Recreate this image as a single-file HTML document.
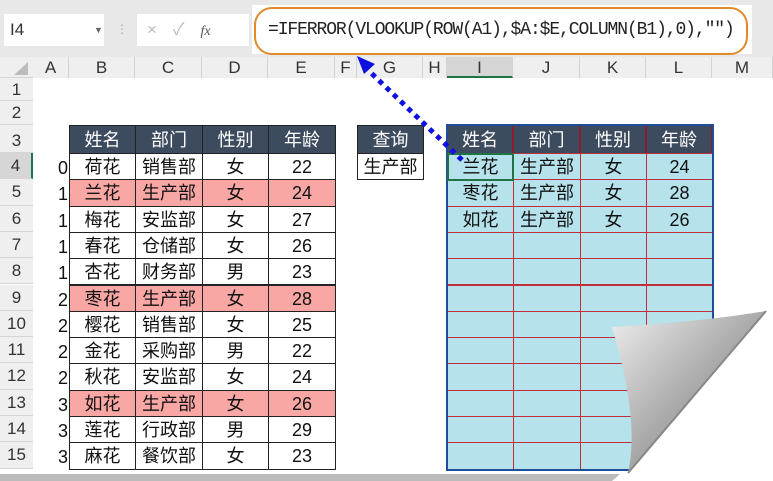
<!DOCTYPE html><html><head><meta charset="utf-8"><style>
body{margin:0;width:773px;height:481px;overflow:hidden;background:#fff;font-family:"Liberation Sans","Noto Sans CJK SC",sans-serif;position:relative}
.a{position:absolute;box-sizing:border-box}
.ch{position:absolute;top:57px;height:21px;font-size:17px;color:#333;text-align:center;line-height:21px;border-right:1px solid #d4d4d4;box-sizing:border-box;background:#efefef}
.rh{position:absolute;left:0;width:33px;font-size:17px;color:#333;text-align:center;background:#efefef;border-bottom:1px solid #d4d4d4;box-sizing:border-box}
.c{position:absolute;box-sizing:border-box;text-align:center;font-size:18px;color:#111;font-family:"Liberation Sans","Noto Sans CJK SC",sans-serif}
</style></head><body>
<div class="a" style="left:0;top:0;width:773px;height:57px;background:#e8e8e8"></div>
<div class="a" style="left:4px;top:14px;width:100px;height:32px;background:#fff;font-size:17px;line-height:32px;padding-left:6px;color:#333">I4<span style="position:absolute;left:90px;font-size:9px;color:#666">▼</span></div>
<div class="a" style="left:116px;top:22px;font-size:12px;color:#aaa">⋮</div>
<div class="a" style="left:137px;top:14px;width:112px;height:32px;background:#fff;font-size:17px;line-height:32px;color:#bbb;padding-left:10px;letter-spacing:16px">×✓<i style="color:#555;font-family:'Liberation Serif';font-size:14px;letter-spacing:0">fx</i></div>
<div class="a" style="left:252px;top:5px;width:500px;height:49px;background:#fff"></div>
<div class="a" style="left:254px;top:7px;width:494px;height:48px;border:2.5px solid #e08a2a;border-radius:18px;font-family:'Liberation Mono',monospace;font-size:18px;line-height:43px;padding-left:12px;color:#222;letter-spacing:-1.1px">=IFERROR(VLOOKUP(ROW(A1),$A:$E,COLUMN(B1),0),"")</div>
<div class="a" style="left:0;top:57px;width:773px;height:21px;background:#efefef;border-bottom:1px solid #d4d4d4"></div>
<svg class="a" style="left:10px;top:60px" width="20" height="16"><polygon points="18,2 18,15 4,15" fill="#bcbcbc"/></svg>
<div class="ch" style="left:33px;width:36px">A</div><div class="ch" style="left:69px;width:66px">B</div><div class="ch" style="left:135px;width:67px">C</div><div class="ch" style="left:202px;width:66px">D</div><div class="ch" style="left:268px;width:67px">E</div><div class="ch" style="left:335px;width:22px">F</div><div class="ch" style="left:357px;width:66px">G</div><div class="ch" style="left:423px;width:24px">H</div><div class="ch" style="left:447px;width:66px;background:#d6d6d6;border-bottom:2px solid #217346">I</div><div class="ch" style="left:513px;width:67px">J</div><div class="ch" style="left:580px;width:66px">K</div><div class="ch" style="left:646px;width:66px">L</div><div class="ch" style="left:712px;width:61px">M</div>
<div class="rh" style="top:78px;height:23px;line-height:23px">1</div>
<div class="rh" style="top:101px;height:24px;line-height:24px">2</div>
<div class="rh" style="top:125px;height:28px;line-height:32px">3</div>
<div id="rows"></div>
<svg class="a" style="left:0;top:0" width="773" height="481">
<line x1="462" y1="160" x2="368" y2="70" stroke="#1010e0" stroke-width="5" stroke-dasharray="5,5"/>
<polygon points="357,56 375,64 364,74" fill="#1010e0"/>
<polygon points="766,311 773,300 773,481 610,481 628,473" fill="#fff"/>
<defs><linearGradient id="cg" x1="0" y1="0" x2="1" y2="1"><stop offset="0" stop-color="#eee"/><stop offset=".5" stop-color="#aaa"/><stop offset="1" stop-color="#777"/></linearGradient></defs>
<path d="M612,327 Q700,322 766,311 L628,473 Q640,420 612,327 Z" fill="url(#cg)"/>
<path d="M628,473 L766,311" stroke="#888" stroke-width="2"/>
<polygon points="0,474 620,474 612,481 0,481" fill="#bbb"/>
</svg>
<script>
var R=[['荷花','销售部','女','22',0],['兰花','生产部','女','24',1],['梅花','安监部','女','27',1],['春花','仓储部','女','26',1],['杏花','财务部','男','23',1],['枣花','生产部','女','28',2],['樱花','销售部','女','25',2],['金花','采购部','男','22',2],['秋花','安监部','女','24',2],['如花','生产部','女','26',3],['莲花','行政部','男','29',3],['麻花','餐饮部','女','23',3]];
var X=[69,135,202,268,335],XR=[447,513,580,646,712],h='';
function cell(x,y,w,hh,t,bg,col,b){return '<div class="c" style="left:'+x+'px;top:'+y+'px;width:'+w+'px;height:'+hh+'px;line-height:'+hh+'px;background:'+bg+';color:'+col+';border:'+b+'">'+t+'</div>';}
var H=['姓名','部门','性别','年龄'];
for(var j=0;j<4;j++){h+=cell(X[j],125,X[j+1]-X[j]+1,29,H[j],'#3d4b5f','#fff','1px solid #222');h+=cell(XR[j],125,XR[j+1]-XR[j],29,H[j],'#3d4b5f','#fff','1px solid #8b1e2a');}
h+=cell(357,125,67,29,'查询','#3d4b5f','#fff','1px solid #222');h+=cell(357,153,67,27,'生产部','#fff','#111','1px solid #222');
var res=[['兰花','生产部','女','24'],['枣花','生产部','女','28'],['如花','生产部','女','26']];
for(var i=0;i<12;i++){var y=153+i*26.3,hh=27.3;var red=(i==1||i==5||i==9);
h+='<div class="rh" style="top:'+y+'px;height:'+26.3+'px;line-height:26px;'+(i==0?'background:#d6d6d6;border-right:2px solid #217346':'')+'">'+(i+4)+'</div>';
h+='<div class="c" style="left:40px;top:'+y+'px;width:28px;height:26px;line-height:30px;text-align:right">'+R[i][4]+'</div>';
for(var j=0;j<4;j++){h+=cell(X[j],y,X[j+1]-X[j]+1,hh,R[i][j],red?'#f8a7a5':'#fff','#111','1px solid #222');
h+=cell(XR[j],y,XR[j+1]-XR[j]+1,hh,i<3?res[i][j]:'','#b6e2ec','#111','1px solid #c0303a');}}
document.getElementById('rows').innerHTML=h+'<div class="a" style="left:446px;top:124px;width:268px;height:347px;border:2px solid #1e4e9a"></div><div class="a" style="left:447px;top:153px;width:67px;height:28px;border:2px solid #217346"></div>';
</script>
</body></html>
